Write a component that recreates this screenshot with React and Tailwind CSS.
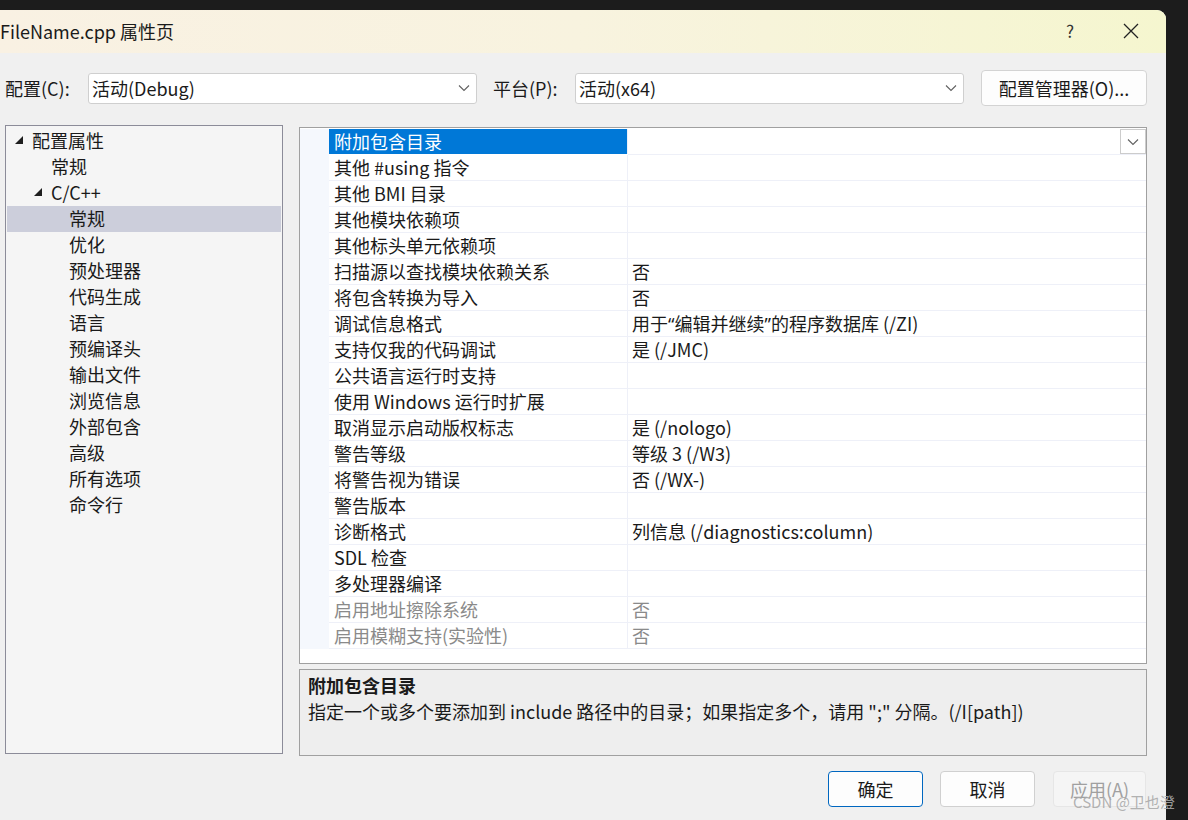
import React from "react";

const Chevron = ({ className = "" }) => (
  <svg width="12" height="8" viewBox="0 0 12 8" className={className}>
    <path d="M1 1.5 L6 6.5 L11 1.5" fill="none" stroke="#606060" strokeWidth="1.1" />
  </svg>
);

const Tri = () => (
  <svg width="8" height="8" viewBox="0 0 8 8">
    <polygon points="8,0 8,8 0,8" fill="#1e1e1e" />
  </svg>
);

const treeItems = [
  { t: "配置属性", lvl: 0, exp: true },
  { t: "常规", lvl: 1 },
  { t: "C/C++", lvl: 1, exp: true },
  { t: "常规", lvl: 2, sel: true },
  { t: "优化", lvl: 2 },
  { t: "预处理器", lvl: 2 },
  { t: "代码生成", lvl: 2 },
  { t: "语言", lvl: 2 },
  { t: "预编译头", lvl: 2 },
  { t: "输出文件", lvl: 2 },
  { t: "浏览信息", lvl: 2 },
  { t: "外部包含", lvl: 2 },
  { t: "高级", lvl: 2 },
  { t: "所有选项", lvl: 2 },
  { t: "命令行", lvl: 2 },
];

const Q = ({ c }) => <span style={{ fontFamily: "'Noto Sans', sans-serif" }}>{c}</span>;

const rows = [
  ["附加包含目录", ""],
  ["其他 #using 指令", ""],
  ["其他 BMI 目录", ""],
  ["其他模块依赖项", ""],
  ["其他标头单元依赖项", ""],
  ["扫描源以查找模块依赖关系", "否"],
  ["将包含转换为导入", "否"],
  [
    "调试信息格式",
    <>
      用于<Q c="“" />编辑并继续<Q c="”" />的程序数据库 (/ZI)
    </>,
  ],
  ["支持仅我的代码调试", "是 (/JMC)"],
  ["公共语言运行时支持", ""],
  ["使用 Windows 运行时扩展", ""],
  ["取消显示启动版权标志", "是 (/nologo)"],
  ["警告等级", "等级 3 (/W3)"],
  ["将警告视为错误", "否 (/WX-)"],
  ["警告版本", ""],
  ["诊断格式", "列信息 (/diagnostics:column)"],
  ["SDL 检查", ""],
  ["多处理器编译", ""],
  ["启用地址擦除系统", "否", true],
  ["启用模糊支持(实验性)", "否", true],
];

export default function App() {
  return (
    <div
      className="relative w-[1188px] h-[820px] overflow-hidden bg-[#1c1c1c] text-[#1a1a1a] text-[18px]"
      style={{ fontFamily: "'Noto Sans CJK SC', 'Noto Sans', sans-serif" }}
    >
      <div className="pt-[10px]">
        <div className="w-[1166px] h-[810px] bg-[#f0f0f0] rounded-tr-[9px] overflow-hidden flex flex-col">
          {/* title bar */}
          <div className="h-[43px] flex items-center bg-gradient-to-r from-[#f9f1e3] via-[#f8f3df] to-[#f5f6cf] shrink-0 pb-[2px]">
            <div className="flex-1 leading-none">FileName.cpp 属性页</div>
            <div className="w-[20px] text-center text-[17px] leading-none mr-[42px] text-[#333]">?</div>
            <svg width="18" height="18" viewBox="0 0 18 18" className="mr-[26px]">
              <path d="M2 2 L16 16 M16 2 L2 16" stroke="#222" strokeWidth="1.3" />
            </svg>
          </div>

          {/* config row */}
          <div className="flex items-center h-[36px] mt-[17px] shrink-0">
            <div className="w-[88px] pl-[5px] leading-none">配置(C):</div>
            <div className="w-[389px] h-[31px] bg-white border border-[#cfcfcf] rounded-[3px] flex items-center pl-[3px] pr-[6px]">
              <span className="flex-1 leading-none">活动(Debug)</span>
              <Chevron />
            </div>
            <div className="w-[98px] pl-[16px] leading-none">平台(P):</div>
            <div className="w-[389px] h-[31px] bg-white border border-[#cfcfcf] rounded-[3px] flex items-center pl-[3px] pr-[6px]">
              <span className="flex-1 leading-none">活动(x64)</span>
              <Chevron />
            </div>
            <div className="ml-[17px] w-[166px] h-[36px] bg-[#fdfdfd] border border-[#d3d3d3] rounded-[4px] flex items-center justify-center leading-none">
              配置管理器(O)...
            </div>
          </div>

          {/* main */}
          <div className="flex mt-[19px] h-[631px] shrink-0">
            <div className="ml-[5px] w-[278px] h-[629px] bg-[#f5f5f5] border border-[#8c8c99] pt-[2px] px-[1px]">
              {treeItems.map((it, i) => (
                <div
                  key={i}
                  className={`h-[26px] flex items-center leading-none pb-[2px] ${it.sel ? "bg-[#cccedb]" : ""}`}
                >
                  <div
                    className={`shrink-0 flex justify-end pr-[9px] ${
                      it.lvl === 0 ? "w-[25px]" : it.lvl === 1 ? "w-[44px]" : "w-[62px]"
                    }`}
                  >
                    {it.exp ? <Tri /> : null}
                  </div>
                  <span>{it.t}</span>
                </div>
              ))}
            </div>

            <div className="ml-[16px] w-[848px] flex flex-col">
              <div className="mt-[2px] h-[537px] bg-white border border-[#a0a0a0] pt-[1px] flex flex-col">
                {rows.map(([n, v, dis], i) => (
                  <div key={i} className="flex h-[26px] leading-none">
                    <div className="w-[29px] bg-[#f5f8fd] shrink-0" />
                    <div
                      className={`w-[299px] shrink-0 flex items-center pl-[5px] pb-[1px] border-r border-[#eef0f8] ${
                        i === 0
                          ? "bg-[#0078d7] text-white h-[25px]"
                          : "border-b border-b-[#eef0f8]"
                      } ${dis ? "text-[#8a8a8a]" : ""}`}
                    >
                      {n}
                    </div>
                    <div
                      className={`flex-1 flex items-center pl-[4px] border-b border-[#eef0f8] ${
                        dis ? "text-[#8a8a8a]" : ""
                      }`}
                    >
                      <span className="flex-1 pb-[1px]">{v}</span>
                      {i === 0 ? (
                        <div className="w-[26px] h-[25px] border border-[#cccccc] bg-white flex items-center justify-center">
                          <Chevron />
                        </div>
                      ) : null}
                    </div>
                  </div>
                ))}
              </div>

              <div className="mt-[5px] h-[87px] bg-[#eeeeee] border border-[#a0a0a0] px-[8px] pt-[4px]">
                <div className="font-bold leading-[22px]">附加包含目录</div>
                <div className="leading-[22px] mt-[4px]">
                  指定一个或多个要添加到 include 路径中的目录；如果指定多个，请用 ";" 分隔。(/I[path])
                </div>
              </div>
            </div>
          </div>

          {/* buttons */}
          <div className="flex mt-[15px] pl-[828px] gap-[17px] h-[36px]">
            <div className="w-[95px] h-[36px] bg-[#fdfdfd] border border-[#0067c0] rounded-[4px] flex items-center justify-center leading-none">
              确定
            </div>
            <div className="w-[95px] h-[36px] bg-[#fdfdfd] border border-[#d0d0d0] rounded-[4px] flex items-center justify-center leading-none">
              取消
            </div>
            <div className="ml-[1px] w-[93px] h-[36px] bg-[#f5f5f5] border border-[#e6e6e6] rounded-[4px] flex items-center justify-center leading-none text-[#a0a0a0]">
              应用(A)
            </div>
          </div>
        </div>
      </div>

      <div className="absolute left-[1073px] top-[794px] text-[15px] leading-none text-[#a9a9a9]/90 whitespace-nowrap">
        CSDN @卫也澄
      </div>
    </div>
  );
}
